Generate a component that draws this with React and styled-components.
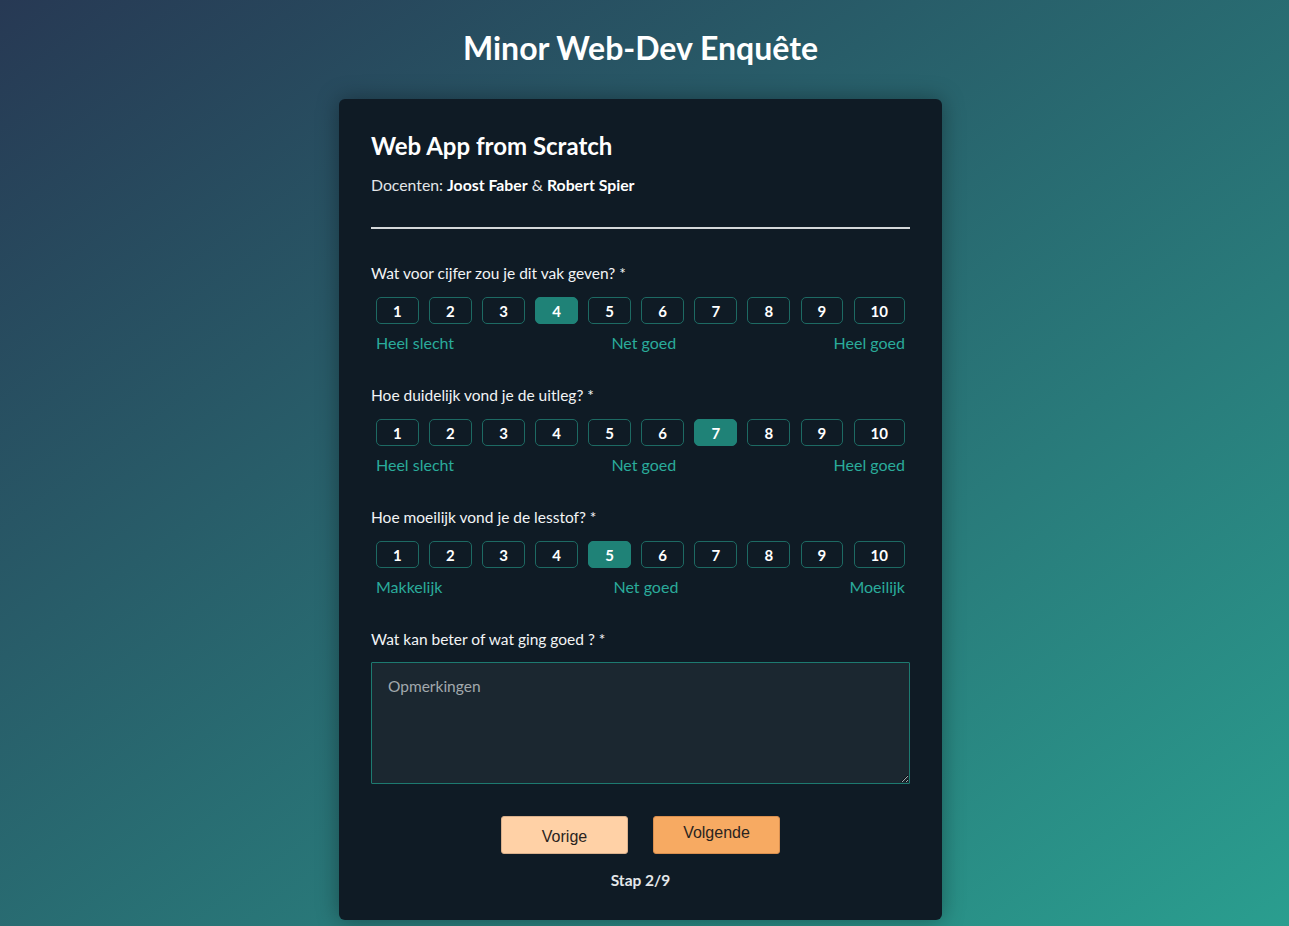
import React, { useState } from "react";
import styled, { createGlobalStyle } from "styled-components";

const GlobalStyle = createGlobalStyle`
  html, body {
    margin: 0;
    padding: 0;
    min-height: 100%;
  }
  body {
    font-family: Lato, "Liberation Sans", sans-serif;
    background: linear-gradient(to bottom right, #273954, #2a9e8f);
    background-attachment: fixed;
    min-height: 926px;
    color: #fff;
  }
`;

const Page = styled.main`
  display: flex;
  flex-direction: column;
  align-items: center;
  padding: 29px 8px 0 0;
`;

const PageTitle = styled.h1`
  margin: 0 0 32px;
  font-size: 32px;
  line-height: 38px;
  font-weight: 700;
  color: #fff;
`;

const Card = styled.section`
  box-sizing: border-box;
  width: 603px;
  padding: 32px 32px 31px;
  background: #0f1b25;
  border-radius: 6px;
  box-shadow: 0 0 22px rgba(0, 0, 0, 0.35);
`;

const CourseTitle = styled.h2`
  margin: 0;
  font-size: 24px;
  line-height: 29px;
  font-weight: 700;
  color: #fff;
`;

const Teachers = styled.p`
  margin: 16px 0 0;
  font-size: 15.8px;
  line-height: 18px;
  color: #e2e6e8;
  strong {
    color: #fff;
    font-weight: 700;
  }
`;

const Divider = styled.hr`
  margin: 33px 0 35px;
  border: 0;
  height: 2px;
  background: #d4d8da;
`;

const Question = styled.fieldset`
  margin: 0 0 34px;
  padding: 0;
  border: 0;
`;

const Label = styled.p`
  margin: 0 0 15px;
  font-size: 15.5px;
  line-height: 18px;
  color: #f2f4f5;
`;

const Scale = styled.div`
  margin: 0 5px;
  display: flex;
  justify-content: space-between;
`;

const RateButton = styled.button`
  box-sizing: border-box;
  height: 27px;
  padding: 0 16px;
  font-family: Lato, "Liberation Sans", sans-serif;
  font-size: 15px;
  font-weight: 700;
  color: #fff;
  background: ${(p) => (p.$active ? "#1f8277" : "transparent")};
  border: 1.5px solid ${(p) => (p.$active ? "#1f8277" : "#1d6a63")};
  border-radius: 5px;
  cursor: pointer;
`;

const ScaleLabels = styled.div`
  margin: 9px 5px 0;
  display: flex;
  justify-content: space-between;
  font-size: 16px;
  line-height: 19px;
  color: #2aab9b;
`;

const TextLabel = styled.label`
  display: block;
  margin: 0 0 14px;
  font-size: 15.5px;
  line-height: 18px;
  color: #f2f4f5;
`;

const TextArea = styled.textarea`
  display: block;
  box-sizing: border-box;
  width: 100%;
  height: 122px;
  padding: 14px 16px;
  background: #1b2730;
  border: 1px solid #1d7a70;
  border-radius: 1px;
  color: #e8eaeb;
  font-family: Lato, "Liberation Sans", sans-serif;
  font-size: 15.5px;
  line-height: 18px;
  &::placeholder {
    color: #a2a9ad;
  }
`;

const Nav = styled.div`
  margin-top: 32px;
  display: flex;
  justify-content: center;
  gap: 25px;
`;

const NavButton = styled.button`
  box-sizing: border-box;
  width: 127px;
  height: 38px;
  padding: ${(p) => (p.$low ? "4px 0 0" : "0 0 4px")};
  font-family: "Liberation Sans", Arial, sans-serif;
  font-size: 16px;
  color: #2a2420;
  background: ${(p) => (p.$primary ? "#f7aa62" : "#ffd1a6")};
  border: 1px solid ${(p) => (p.$primary ? "#d98f4f" : "#d9b08c")};
  border-radius: 3px;
  cursor: pointer;
`;

const Step = styled.p`
  margin: 17px 0 0;
  text-align: center;
  font-size: 15.5px;
  line-height: 18px;
  font-weight: 700;
  color: #e4e8ea;
`;

const questions = [
  { q: "Wat voor cijfer zou je dit vak geven? *", sel: 4, labels: ["Heel slecht", "Net goed", "Heel goed"] },
  { q: "Hoe duidelijk vond je de uitleg? *", sel: 7, labels: ["Heel slecht", "Net goed", "Heel goed"] },
  { q: "Hoe moeilijk vond je de lesstof? *", sel: 5, labels: ["Makkelijk", "Net goed", "Moeilijk"] },
];

function RatingQuestion({ q, sel, labels }) {
  const [value, setValue] = useState(sel);
  return (
    <Question>
      <Label>{q}</Label>
      <Scale>
        {Array.from({ length: 10 }, (_, i) => i + 1).map((n) => (
          <RateButton key={n} type="button" $active={value === n} onClick={() => setValue(n)}>
            {n}
          </RateButton>
        ))}
      </Scale>
      <ScaleLabels>
        <span>{labels[0]}</span>
        <span>{labels[1]}</span>
        <span>{labels[2]}</span>
      </ScaleLabels>
    </Question>
  );
}

export default function App() {
  return (
    <>
      <GlobalStyle />
      <Page>
        <PageTitle>Minor Web-Dev Enquête</PageTitle>
        <Card>
          <CourseTitle>Web App from Scratch</CourseTitle>
          <Teachers>
            Docenten: <strong>Joost Faber</strong> &amp; <strong>Robert Spier</strong>
          </Teachers>
          <Divider />
          {questions.map((item) => (
            <RatingQuestion key={item.q} {...item} />
          ))}
          <TextLabel htmlFor="opm">Wat kan beter of wat ging goed ? *</TextLabel>
          <TextArea id="opm" placeholder="Opmerkingen" />
          <Nav>
            <NavButton type="button" $low>Vorige</NavButton>
            <NavButton type="button" $primary>Volgende</NavButton>
          </Nav>
          <Step>Stap 2/9</Step>
        </Card>
      </Page>
    </>
  );
}
